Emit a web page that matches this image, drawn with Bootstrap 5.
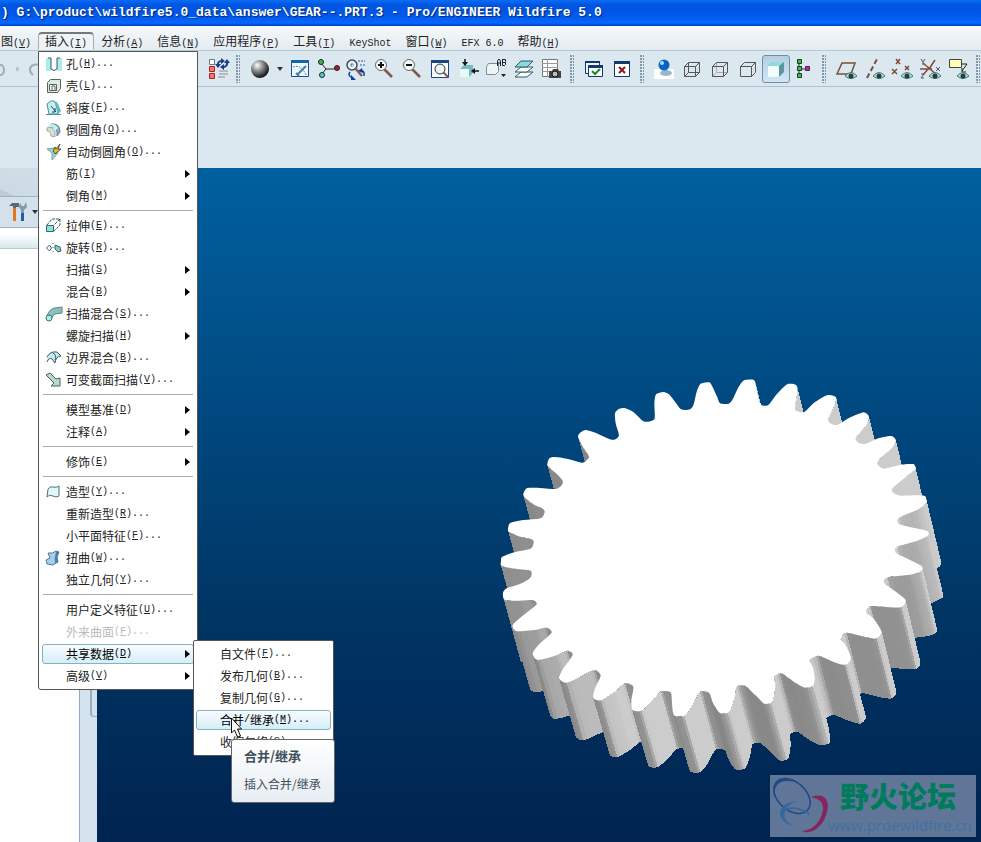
<!DOCTYPE html>
<html lang="zh-CN">
<head>
<meta charset="utf-8">
<meta name="viewport" content="width=device-width, initial-scale=1">
<title>GEAR--.PRT.3 - Pro/ENGINEER Wildfire 5.0</title>
<link href="https://cdn.jsdelivr.net/npm/bootstrap@5.3.0/dist/css/bootstrap.min.css" rel="stylesheet">
<style>
body{font:12px/16px "Noto Sans CJK SC",sans-serif;color:#222;background:#dce8f0;overflow:hidden}
.en{font-family:"Liberation Mono","Noto Sans CJK SC",monospace;font-size:10px}
.titlebar{height:26px;padding-left:1px;background:linear-gradient(#0a6df5,#0054e0 20%,#0058ea 60%,#0668ff 88%,#0040c0);color:#fff;
 font:bold 13px/26px "Liberation Mono",monospace;text-shadow:1px 1px 1px #00246e;white-space:pre}
.menubar{height:25px;background:linear-gradient(#f6f9fb,#e3ebf1);border-bottom:1px solid #b4cbd6;padding-top:6px}
.menubar button{border:1px solid transparent;background:none;padding:0 6px;height:18px;line-height:16px;color:#222;white-space:nowrap}
.menubar button:first-child{padding-left:0}
.menubar button.on{border-color:#777 #aaa transparent;border-top-width:2px;border-radius:4px 4px 0 0;background:#eef3f7;line-height:14px}
.tools{height:36px;border-bottom:1px solid #a9c3d2;background:#dce8f0;box-shadow:0 1px #f4f9fb}
.tools button{width:28px;height:28px;padding:0;border:1px solid transparent;background:none;border-radius:3px;flex:none;display:flex;align-items:center;justify-content:center}
.tools button.thin{width:12px}
.tools button.on{border-color:#6f8fa5;background:linear-gradient(#b4cfe2,#cfe6f6)}
.tools svg{width:24px;height:24px;flex:none}
.edge{width:204px;flex:none}
.edge svg + svg{margin-left:-8px}
.grip{width:12px;height:28px;flex:none;margin-right:2px;padding:0 4px}
.grip i{display:block;height:28px;background:radial-gradient(circle at 1px 1px,#8098aa 1px,transparent 1px) 0 0/3px 3px}
.blankbar{height:81px;background:#dce8f0}
.side{width:79px;background:#fff;flex:none}
.tabs{height:28px;background:linear-gradient(25deg,#bccbd6 10%,#ccdae4 11%,#d3e0e9)}
.sidebar-tools{height:32px;background:#d4e0ea;border:solid #9cb3c2;border-width:1px 0;padding-left:8px}
.sidebar-tools button{border:0;background:none;padding:0}
.treehead{height:21px;background:linear-gradient(#fff 30%,#d7e8ea);border-bottom:1px solid #b3cdd2}
.split{width:18px;background:#d4e3ed;border-left:1px solid #92aabc;flex:none;padding:521px 0 0 10px}
.split i{display:block;height:28px;border:2px solid #9baec6;border-width:0 0 1px 2px;border-radius:0 0 0 4px}
.view{background:linear-gradient(#00609f,#004b83 32%,#003766 63%,#002350 100%)}
.gear{position:absolute;left:400px;top:200px}
.pop{position:absolute;margin:0;padding:1px 3px 2px;background:#fff;border:1px solid #555;border-radius:0 0 3px 3px;font-size:12px;min-width:0;display:block}
.main-pop{left:38px;top:51px;width:160px;z-index:5}
.sub-pop{left:193px;top:640px;width:141px;z-index:6;border-radius:2px;padding:2px}
.pop button{display:flex;align-items:center;width:100%;height:22px;border:1px solid transparent;border-radius:3px;background:none;padding:0 0 0 2px;color:#222;white-space:nowrap;text-align:left;line-height:16px}
.pop button svg.ic{width:18px;height:18px;margin-right:3px;flex:none}
.pop button .gap{width:21px;flex:none}
.pop button .arr{width:5px;height:8px;margin-left:auto;margin-right:3px}
.pop button.on{height:20px;margin:1px 0;border-color:#86b0bd;background:linear-gradient(#f8fcff,#d5eef9);color:#000}
.pop button:disabled{color:#bbb}
.pop hr{margin:3px 1px 4px;border:0;border-top:1px solid #aaa;opacity:1}
.tip{position:absolute;left:231px;top:739px;width:104px;z-index:7;background:linear-gradient(#fff,#e7edf3);border:1px solid #666;border-radius:3px;padding:8px 0 10px 12px;color:#3f4f5a;line-height:16px;font-size:12px}
.tip strong{display:block;margin-bottom:12px;font-size:13px}
.pointer{position:absolute;left:230px;top:717px;z-index:8}
.brand-note{position:absolute;right:5px;bottom:5px;width:206px;height:62px;background:#5f7699}
.brand-note svg{flex:none}
.brand-note b{display:block;font-size:29px;line-height:40px;color:#007c5c;padding-left:12px;font-weight:900;white-space:nowrap}
.brand-note a{display:block;font:15px/20px "Open Sans",sans-serif;color:#41709f;text-decoration:none;white-space:nowrap}
</style>
</head>
<body class="vh-100 d-flex flex-column">
<header>
<div class="titlebar">) G:\product\wildfire5.0_data\answer\GEAR--.PRT.3 - Pro/ENGINEER Wildfire 5.0</div>
<nav class="menubar d-flex align-items-start">
<button>图<span class="en">(<u>V</u>)</span></button><button class="on">插入<span class="en">(<u>I</u>)</span></button><button>分析<span class="en">(<u>A</u>)</span></button><button>信息<span class="en">(<u>N</u>)</span></button><button>应用程序<span class="en">(<u>P</u>)</span></button><button>工具<span class="en">(<u>T</u>)</span></button><button><span class="en">KeyShot</span></button><button>窗口<span class="en">(<u>W</u>)</span></button><button><span class="en">EFX 6.0</span></button><button>帮助<span class="en">(<u>H</u>)</span></button>
</nav>
<div class="tools d-flex align-items-center">
<div class="edge d-flex"><svg viewBox="0 0 24 24" fill="none" stroke="#a3adb5" stroke-width="2"><path d="M-2 8q6-1 6 5t-6 5"/></svg><svg viewBox="0 0 24 24" fill="none" stroke="#a3adb5" stroke-width="2"><circle cx="1" cy="12" r="2" fill="#b5c2cc" stroke="none"/><path d="M24 8q-10-2-10 5q0 3 3 5"/></svg></div>
<button aria-label="再生"><svg viewBox="0 0 24 24"><path d="M3.500 2.500h5v5h-5z" fill="#fff" stroke="#777"/><path d="M3.500 9.500h5v5h-5zM3.500 16.500h5v5h-5z" fill="#ef7474" stroke="#a22"/><path d="M13 14h9M13 17h9M12 20h7" stroke="#889"/><path d="M12 9q-1-5 4-5M21 4q1 6-4 6" fill="none" stroke="#174082" stroke-width="2"/><path d="M15 1l4 3-4 3zM18 7l-4 3 4 3zM9 7h6l-3 4zM18 6h6l-3-4z" fill="#174082"/></svg></button>
<div class="grip"><i></i></div>
<button aria-label="外观库"><svg viewBox="0 0 24 24"><defs><radialGradient id="sp" cx=".35" cy=".3" r=".7"><stop stop-color="#fff"/><stop offset=".4" stop-color="#999"/><stop offset="1" stop-color="#151515"/></radialGradient></defs><circle cx="12" cy="12" r="9" fill="url(#sp)"/></svg></button>
<button class="thin" aria-label="更多"><svg viewBox="0 0 24 24"><path d="M9 10h6l-3 4z" fill="#333"/></svg></button>
<button aria-label="草绘"><svg viewBox="0 0 24 24"><path d="M3.500 3.500h17v16h-17z" fill="#eef9ff" stroke="#164e8e"/><path d="M3 3h18v3H3z" fill="#1563ad"/><path d="M5 10q8-3 13 8" fill="none" stroke="#4a86a0" stroke-dasharray="2 1"/><path d="M9 18l9-9M8 16l3 3" stroke="#4a7aa8" stroke-width="2"/></svg></button>
<button aria-label="关系"><svg viewBox="0 0 24 24" stroke="#222"><path d="M5 6l5 6h11M5 18l5-6" fill="none"/><circle cx="5" cy="5" r="2.500" fill="#3bbd4c"/><circle cx="6" cy="18" r="2.500" fill="#49d5d2"/><circle cx="21" cy="11" r="2.500" fill="#b01834"/></svg></button>
<button aria-label="定向"><svg viewBox="0 0 24 24" fill="none"><circle cx="8" cy="8" r="5" fill="#eef6f8" stroke="#445" stroke-width="1.500"/><path d="M11 11l7 8" stroke="#7c6058" stroke-width="2.500"/><path d="M8 6v4M6 8h4M14 4h7M16 8h5" stroke="#26a" stroke-dasharray="2 1"/><path d="M6 15q-3 4 3 6M16 14q5-1 4 5" stroke="#163d98" stroke-width="1.500"/><path d="M7 18v5h5zM18 11l-4 3 5 2z" fill="#163d98"/></svg></button>
<button aria-label="放大"><svg viewBox="0 0 24 24" fill="none"><path d="M12 12l8 8" stroke="#82564d" stroke-width="2.500"/><circle cx="9" cy="8" r="5.500" fill="#f5fbfb" stroke="#666"/><path d="M6 8h6M9 5v6" stroke="#111" stroke-width="2"/></svg></button>
<button aria-label="缩小"><svg viewBox="0 0 24 24" fill="none"><path d="M12 12l8 8" stroke="#82564d" stroke-width="2.500"/><circle cx="9" cy="8" r="5.500" fill="#f5fbfb" stroke="#666"/><path d="M6 8h6" stroke="#111" stroke-width="2"/></svg></button>
<button aria-label="重新调整"><svg viewBox="0 0 24 24" fill="none"><path d="M3.500 3.500h17v17h-17z" fill="#fff" stroke="#174782"/><path d="M3 3h18v3H3z" fill="#174782"/><path d="M15 15l5 5" stroke="#7c5548" stroke-width="2"/><circle cx="12" cy="12" r="5" fill="#edf5f5" stroke="#333"/></svg></button>
<button aria-label="视图方向"><svg viewBox="0 0 24 24"><path d="M4 12l4-4h9v8l-4 4H4z" fill="#76bac0"/><path d="M4 12h9v8H4z" fill="#e4fbf8"/><path d="M9 2v4M23 14h-4" stroke="#111" stroke-width="1.500"/><path d="M6 5h6l-3 4zM19 11v6l-4-3z" fill="#111"/></svg></button>
<button aria-label="已命名视图"><svg viewBox="0 0 24 24"><path d="M2.500 9.500l2-3h10v8l-3 3h-9z" fill="#edf5f7" stroke="#888"/><path d="M13.500 9v-5l1.500-2 1.500 2v5M13.500 6h3M18.500 2v6.500h2l1-1v-2h-3h2l1-1v-2h-3" stroke="#222" fill="none"/><path d="M17 17h5l-2.500 3z" fill="#222"/></svg></button>
<button aria-label="层"><svg viewBox="0 0 24 24" stroke="#335b60"><path d="M3 20l6-5h12l-6 5z" fill="#fff"/><path d="M3 15l6-5h12l-6 5z" fill="#fff"/><path d="M3 10l6-6h12l-6 6z" fill="#87dbe0"/></svg></button>
<button aria-label="视图管理器"><svg viewBox="0 0 24 24"><path d="M2.500 2.500h15v17h-15z" fill="#fff" stroke="#777"/><path d="M2 6.500h16M2 10.500h16M2 14.500h10M7.500 2v18" stroke="#999"/><path d="M9 14h3l1-2h5l1 2h2v7H9z" fill="#444"/><circle cx="15" cy="17" r="3" fill="#bbb" stroke="#111"/></svg></button>
<div class="grip"><i></i></div>
<button aria-label="激活窗口"><svg viewBox="0 0 24 24"><path d="M3.500 4.500h14v12h-14z" fill="#eef7ff" stroke="#12386d"/><path d="M3 4h15v2H3z" fill="#12386d"/><path d="M6.500 8.500h14v11h-14z" fill="#fff" stroke="#12386d"/><path d="M6 8h15v3H6z" fill="#12386d"/><path d="M10 14l3 3 5-5" fill="none" stroke="#168b22" stroke-width="2"/></svg></button>
<button aria-label="关闭窗口"><svg viewBox="0 0 24 24"><path d="M4.500 4.500h15v15h-15z" fill="#fff" stroke="#12386d"/><path d="M4 4h16v3H4z" fill="#12386d"/><path d="M9 10l6 6M15 10l-6 6" stroke="#851919" stroke-width="2"/></svg></button>
<div class="grip"><i></i></div>
<button aria-label="渲染"><svg viewBox="0 0 24 24"><path d="M2 12h20v10H2z" fill="#fff"/><ellipse cx="14" cy="16" rx="6" ry="3" fill="#9ab6ce"/><circle cx="12" cy="8" r="5.500" fill="#0c63c6"/><circle cx="10" cy="6" r="2" fill="#a0e4ff"/></svg></button>
<button aria-label="线框"><svg viewBox="0 0 24 24" fill="none" stroke="#555"><path d="M4.500 9.500h11v10h-11zM8.500 5.500h11v10h-11zM4.500 9.500l4-4M15.500 9.500l4-4M4.500 19.500l4-4M15.500 19.500l4-4"/></svg></button>
<button aria-label="隐藏线"><svg viewBox="0 0 24 24" fill="none" stroke="#555"><path d="M8.500 5.500v10h11M4.500 19.500l4-4" stroke="#aaa"/><path d="M4.500 9.500h11v10h-11zM4.500 9.500l4-4h11v10l-4 4M15.500 9.500l4-4"/></svg></button>
<button aria-label="无隐藏线"><svg viewBox="0 0 24 24" fill="none" stroke="#555"><path d="M4.500 9.500h11v10h-11zM4.500 9.500l4-4h11v10l-4 4M15.500 9.500l4-4"/></svg></button>
<button class="on" aria-label="着色"><svg viewBox="0 0 24 24"><path d="M4 9l4-4h12v10l-5 5H4z" fill="#5d9599"/><path d="M4 9l4-4h12l-5 4z" fill="#92dadf"/><path d="M4 9h11v11H4z" fill="#effefb"/></svg></button>
<button aria-label="模型树"><svg viewBox="0 0 24 24" stroke="#153f1c" fill="#45ba51"><path d="M7 3v18M7 12h8"/><path d="M5.500 2.500h4v4h-4zM5.500 9.500h4v4h-4zM5.500 16.500h4v4h-4z"/><path d="M13.500 9.500h4v4h-4z" fill="#b02cae" stroke="#51205c"/></svg></button>
<div class="grip"><i></i></div>
<button aria-label="基准平面"><svg viewBox="0 0 24 24"><path d="M3 17L8 6h13l-4 11z" fill="none" stroke="#76503d" stroke-width="1.500"/><path d="M11 19q6-7 12 0q-6 5-12 0" fill="#ace1d6" stroke="#4e7774"/><circle cx="17" cy="19" r="2.500" fill="#243f42"/></svg></button>
<button aria-label="基准轴"><svg viewBox="0 0 24 24"><path d="M5 21L15 2" stroke="#76503d" stroke-width="2" stroke-dasharray="5 3"/><path d="M11 19q6-7 12 0q-6 5-12 0" fill="#ace1d6" stroke="#4e7774"/><circle cx="17" cy="19" r="2.500" fill="#243f42"/></svg></button>
<button aria-label="基准点"><svg viewBox="0 0 24 24"><path d="M6 2l4 5M10 2L6 7M2 12l5 5M7 12l-5 5M15 9l4 4M19 9l-4 4" stroke="#824a38" stroke-width="1.500"/><path d="M11 19q6-7 12 0q-6 5-12 0" fill="#ace1d6" stroke="#4e7774"/><circle cx="17" cy="19" r="2.500" fill="#243f42"/></svg></button>
<button aria-label="坐标系"><svg viewBox="0 0 24 24"><path d="M2 12h12M11 12l6-9M5 6l14 12M10 12l-5 6" stroke="#824a38" stroke-width="1.500"/><path d="M3 2l2 3 2-3M5 5v3M3 17h3l-3 4h3M18 10l4 4M22 10l-4 4" stroke="#557" fill="none"/><path d="M11 19q6-7 12 0q-6 5-12 0" fill="#ace1d6" stroke="#4e7774"/><circle cx="17" cy="19" r="2.500" fill="#243f42"/></svg></button>
<button aria-label="注释"><svg viewBox="0 0 24 24"><path d="M3.500 2.500h12v8h-12z" fill="#ffffb8" stroke="#444"/><path d="M15 7h6l-5 7M16 11v4h4" fill="none" stroke="#222"/><path d="M11 19q6-7 12 0q-6 5-12 0" fill="#ace1d6" stroke="#4e7774"/><circle cx="17" cy="19" r="2.500" fill="#243f42"/></svg></button>
<div class="grip"><i></i></div>
</div>
<div class="blankbar"></div>
</header>
<main class="d-flex flex-grow-1 overflow-hidden">
<aside class="side"><div class="tabs"></div><div class="sidebar-tools d-flex align-items-center"><button aria-label="设置"><svg width="30" height="24" viewBox="0 0 30 24"><path d="M1 6l3-3h7v4H8v2H5V6z" fill="#536b7c"/><path d="M5 8h3v13H5z" fill="#e17520"/><path d="M12 3l2 3 2 0 2-4 1 5-3 3v4h-3v-4l-2-3z" fill="#829ba9"/><path d="M13 13h3v8h-3z" fill="#235caf"/><path d="M24 10h6l-3 4z" fill="#333"/></svg></button></div><div class="treehead"></div></aside>
<div class="split"><i></i></div>
<section class="view position-relative flex-grow-1 overflow-hidden">
<svg class="gear" width="460" height="410" viewBox="497 368 460 410"><g id="walls" shape-rendering="crispEdges"></g><path id="face" fill="#fff"/></svg>
<div class="brand-note d-flex"><svg width="58" height="62" viewBox="0 0 58 62" fill="none"><ellipse cx="22" cy="21" rx="14" ry="21" transform="rotate(-48 22 21)" stroke="#214a84" stroke-width="1.500"/><path d="M5 24q-5-13 4-19q7-3 16 2q-12-3-17 2q-5 5-3 15z" fill="#214a84"/><path d="M27 26q-18 2-17 15q2 7 18 12q-9-3-13-9q-3-13 12-18z" fill="#36669a"/><path d="M11 38q8-7 18-4t10 6" stroke="#36669a" stroke-width="1.500"/><path d="M41 22q15-5 17 8q-1 17-13 25q-8 4-13 1q12-1 18-12q9-19-9-22z" fill="#84265e"/></svg><div><b>野火论坛</b><a href="#">www.proewildfire.cn</a></div></div>
</section>
</main>

<div class="pop main-pop" role="menu">
<button><svg class="ic" viewBox="0 0 18 18"><path d="M1 3h5v13H1zM12 3h5v13h-5z" fill="#a9ece9"/><path d="M3 3h3v11q3 3 6 0V3h3" fill="none" stroke="#3b5960"/></svg>孔<span class="en">(<u>H</u>)...</span></button>
<button><svg class="ic" viewBox="0 0 18 18" fill="#dcebe0" stroke="#58645e"><path d="M2.500 5.500l3-3h10v9l-3 4h-10z"/><path d="M4.500 7.500h7v6h-7zM7 13V9h3v4" fill="#fff"/></svg>壳<span class="en">(<u>L</u>)...</span></button>
<button><svg class="ic" viewBox="0 0 18 18"><path d="M1 15.500h15M2 5l4-3h3l4 4v9H4z" fill="#c5f0f0" stroke="#4b8f98"/><path d="M9 2l3 1 4 9-3 3z" fill="#62b8c2"/><path d="M6 7l5 6M10 9v4H7" stroke="#246" fill="none"/></svg>斜度<span class="en">(<u>F</u>)...</span></button>
<button><svg class="ic" viewBox="0 0 18 18"><path d="M6 3q9-1 9 8l-3 4V11q0-5-6-5z" fill="#6fc3c8" stroke="#678"/><path d="M2 6l4-3q5 0 7 4l-2 2q-2-3-5-3l-4 4z" fill="#c2eeec"/><path d="M2 7q5-2 8 3v6l-4-1q0-5-4-5z" fill="#d9dfd8" stroke="#9aa"/></svg>倒圆角<span class="en">(<u>O</u>)...</span></button>
<button><svg class="ic" viewBox="0 0 18 18"><path d="M2 6l7-1 4 5-6 7V10z" fill="#91dadb" stroke="#87a09f"/><path d="M8 8l2-4 1 2 4-5-2 5h3l-6 5z" fill="#e0b71b" stroke="#222" stroke-width=".7"/></svg>自动倒圆角<span class="en">(<u>O</u>)...</span></button>
<button><i class="gap"></i>筋<span class="en">(<u>I</u>)</span><svg class="arr" viewBox="0 0 5 8"><path d="M0 0l5 4-5 4z"/></svg></button>
<button><i class="gap"></i>倒角<span class="en">(<u>M</u>)</span><svg class="arr" viewBox="0 0 5 8"><path d="M0 0l5 4-5 4z"/></svg></button>
<hr>
<button><svg class="ic" viewBox="0 0 18 18"><path d="M1.500 8.500h7v6h-7z" fill="#8ce0df" stroke="#3c666b"/><path d="M2 8l5-6h8v6l-6 6M15 2l-6 6" fill="none" stroke="#36565c" stroke-dasharray="3 1"/></svg>拉伸<span class="en">(<u>E</u>)...</span></button>
<button><svg class="ic" viewBox="0 0 18 18" stroke="#3c666b" fill="#fff"><path d="M1.500 9l3-3 2 3-2 3z"/><path d="M8 4v1M8 8v1M8 12v1"/><path d="M10 6l5 2 1 4-3 1-3-3z" fill="#86c7c7"/></svg>旋转<span class="en">(<u>R</u>)...</span></button>
<button><i class="gap"></i>扫描<span class="en">(<u>S</u>)</span><svg class="arr" viewBox="0 0 5 8"><path d="M0 0l5 4-5 4z"/></svg></button>
<button><i class="gap"></i>混合<span class="en">(<u>B</u>)</span><svg class="arr" viewBox="0 0 5 8"><path d="M0 0l5 4-5 4z"/></svg></button>
<button><svg class="ic" viewBox="0 0 18 18"><path d="M2 11Q5 3 10 3l7-1v6l-7 1q-2 1-3 4z" fill="#8dbfbc" stroke="#5c8483"/><circle cx="4" cy="13" r="3" fill="#a1f1ee" stroke="#347578"/></svg>扫描混合<span class="en">(<u>S</u>)...</span></button>
<button><i class="gap"></i>螺旋扫描<span class="en">(<u>H</u>)</span><svg class="arr" viewBox="0 0 5 8"><path d="M0 0l5 4-5 4z"/></svg></button>
<button><svg class="ic" viewBox="0 0 18 18" fill="#bef0ee" stroke="#456"><path d="M2 8q3-6 10-5l4 4q-5 0-6 7l-3-4q-3-2-5 3M8 4q4 2 2 7"/></svg>边界混合<span class="en">(<u>B</u>)...</span></button>
<button><svg class="ic" viewBox="0 0 18 18" fill="#b6d9cf" stroke="#4d625f"><path d="M1 4l4-2 6 6 4-1v8H6l3-3z"/></svg>可变截面扫描<span class="en">(<u>V</u>)...</span></button>
<hr>
<button><i class="gap"></i>模型基准<span class="en">(<u>D</u>)</span><svg class="arr" viewBox="0 0 5 8"><path d="M0 0l5 4-5 4z"/></svg></button>
<button><i class="gap"></i>注释<span class="en">(<u>A</u>)</span><svg class="arr" viewBox="0 0 5 8"><path d="M0 0l5 4-5 4z"/></svg></button>
<hr>
<button><i class="gap"></i>修饰<span class="en">(<u>E</u>)</span><svg class="arr" viewBox="0 0 5 8"><path d="M0 0l5 4-5 4z"/></svg></button>
<hr>
<button><svg class="ic" viewBox="0 0 18 18"><path d="M2 14l1-8q2-3 5-2q4 1 6-1v10q-3 2-6 0q-4-2-6 1z" fill="#dff7fa" stroke="#536f78"/></svg>造型<span class="en">(<u>Y</u>)...</span></button>
<button><i class="gap"></i>重新造型<span class="en">(<u>R</u>)...</span></button>
<button><i class="gap"></i>小平面特征<span class="en">(<u>F</u>)...</span></button>
<button><svg class="ic" viewBox="0 0 18 18"><path d="M3 4q5 1 8-2l3 1-2 5 1 5-5 3-6-1-1-4 4-2z" fill="#a5cfe8" stroke="#4d7896"/><path d="M11 3l3 0-2 5 1 5-3 1q-1-5 1-11z" fill="#487fa5"/></svg>扭曲<span class="en">(<u>W</u>)...</span></button>
<button><i class="gap"></i>独立几何<span class="en">(<u>Y</u>)...</span></button>
<hr>
<button><i class="gap"></i>用户定义特征<span class="en">(<u>U</u>)...</span></button>
<button disabled><i class="gap"></i>外来曲面<span class="en">(<u>F</u>)...</span></button>
<button class="on"><i class="gap"></i>共享数据<span class="en">(<u>D</u>)</span><svg class="arr" viewBox="0 0 5 8"><path d="M0 0l5 4-5 4z"/></svg></button>
<button><i class="gap"></i>高级<span class="en">(<u>V</u>)</span><svg class="arr" viewBox="0 0 5 8"><path d="M0 0l5 4-5 4z"/></svg></button>
</div>
<div class="pop sub-pop" role="menu">
<button><i class="gap"></i>自文件<span class="en">(<u>F</u>)...</span></button>
<button><i class="gap"></i>发布几何<span class="en">(<u>B</u>)...</span></button>
<button><i class="gap"></i>复制几何<span class="en">(<u>G</u>)...</span></button>
<button class="on"><i class="gap"></i>合并<span class="en">/</span>继承<span class="en">(<u>M</u>)...</span></button>
<button><i class="gap"></i>收缩包络<span class="en">(<u>S</u>)...</span></button>
</div>
<div class="tip" role="tooltip"><strong>合并/继承</strong>插入合并/继承</div>
<svg class="pointer" width="14" height="22" viewBox="0 0 14 22"><path d="M1.500 1v15l3-3 3 7 3-1-3-7h4z" fill="#fff" stroke="#111"/></svg>
<script src="https://cdn.jsdelivr.net/npm/bootstrap@5.3.0/dist/js/bootstrap.bundle.min.js"></script>
<script>
// Tooth outline of the top face in clockwise order: origin x, origin y, then points at three units per pixel.
const sets = [
 [490,370,[[140,703],[128,690],[90,692],[44,690],[39,668],[50,655],[95,640],[122,622],[122,602],[80,597],[35,588],[33,572],[37,560],[75,546],[122,536],[131,518],[125,508],[90,500],[56,485],[55,470],[62,458],[100,450],[152,445],[164,427],[158,416],[130,403],[102,380],[101,368],[112,354],[150,354],[197,357],[214,347],[218,333],[200,312],[175,290],[172,281],[178,265],[195,261],[230,266],[275,278],[291,270],[297,259],[283,238],[270,215],[264,198],[272,187],[288,180],[320,190],[360,208],[376,208],[387,195],[377,160],[375,130],[385,118],[403,114],[430,126],[460,154],[480,154],[494,145],[493,100],[498,73],[520,66],[537,73],[555,95],[573,118],[600,118],[611,103],[620,65],[632,41],[658,37],[668,52],[682,82],[690,100],[716,101]]],
 [730,370,[[8,88],[25,52],[42,31],[72,30],[80,55],[92,103],[115,105],[138,75],[168,45],[183,41],[198,45],[203,60],[195,115],[201,123],[222,127],[250,100],[285,78],[300,75],[318,82],[315,103],[295,148],[301,160],[322,165],[355,145],[400,127],[417,140],[410,165],[378,203],[385,218],[406,222],[445,205],[485,198],[498,212],[488,232],[443,275],[448,289],[463,296],[510,285],[550,282],[556,297],[535,315],[487,355],[492,370],[512,377],[550,376],[585,378],[588,400],[560,420],[507,443],[506,461],[530,469],[590,482],[594,497],[560,513],[502,530],[497,548],[530,565],[575,588],[573,604],[540,614],[473,622],[463,640],[490,660],[527,690],[515,711],[480,712],[422,708],[409,728]]],
 [730,590,[[430,85],[455,125],[440,145],[408,142],[350,128],[332,148],[346,164],[363,205],[345,225],[308,215],[265,197],[239,212],[250,235],[254,284],[225,293],[193,277],[155,250],[134,260],[136,290],[128,335],[102,341],[78,318],[45,287],[20,290]]],
 [490,590,[[735,320],[719,365],[690,370],[669,340],[657,309],[630,305],[607,348],[583,378],[552,376],[546,342],[542,307],[513,304],[490,330],[455,362],[427,360],[424,330],[430,290],[405,280],[375,305],[333,331],[310,324],[315,295],[332,257],[315,240],[285,253],[230,278],[207,265],[220,235],[248,195],[232,182],[200,196],[143,210],[128,190],[148,162],[185,128],[170,113],[140,119],[80,124],[68,105],[100,76]]]
];
const key = sets.flatMap(([ox,oy,a]) => a.map(([x,y]) => [ox+x/3, oy+y/3]));
const pts = [], k = .35, n = key.length, steps = 4;
key.forEach((p,i) => {
  const a = key[(i+n-1)%n], b = key[(i+1)%n], c = key[(i+2)%n];
  for (let s=0; s<steps; s++) {
    const t=s/steps, u=1-t;
    const at = j => u*u*(1+2*t)*p[j] + t*t*(3-2*t)*b[j] + t*u*u*k*(b[j]-a[j]) - t*t*u*k*(c[j]-p[j]);
    pts.push([at(0),at(1)]);
  }
});
const path = list => 'M'+list.map(p=>p.map(v=>v.toFixed(2)).join(' ')).join('L')+'Z';
document.getElementById('face').setAttribute('d', path(pts));
// Walls run from the face outline to the lower rim; nearer walls are painted last.
const low = ([x,y]) => [x+17-(x-500)/180, y+62-Math.max(0,y-600)/20];
const walls = pts.map((p,i) => {
  const q=pts[(i+1)%pts.length], dx=q[0]-p[0], dy=q[1]-p[1], l=Math.hypot(dx,dy)||1;
  return {p,q,nx:dy/l,ny:-dx/l,y:(p[1]+q[1])/2};
}).filter(w => w.ny*60+w.nx*16>0).sort((a,b)=>a.y-b.y);
document.getElementById('walls').innerHTML = walls.map(w => {
  const g=Math.round(w.nx<0 ? 146+w.nx*14 : 146+Math.min(1,w.nx*1.6)*58);
  return `<path d="${path([w.p,w.q,low(w.q),low(w.p)])}" fill="rgb(${g},${g},${g})"/>`;
}).join('');
</script>
</body>
</html>
